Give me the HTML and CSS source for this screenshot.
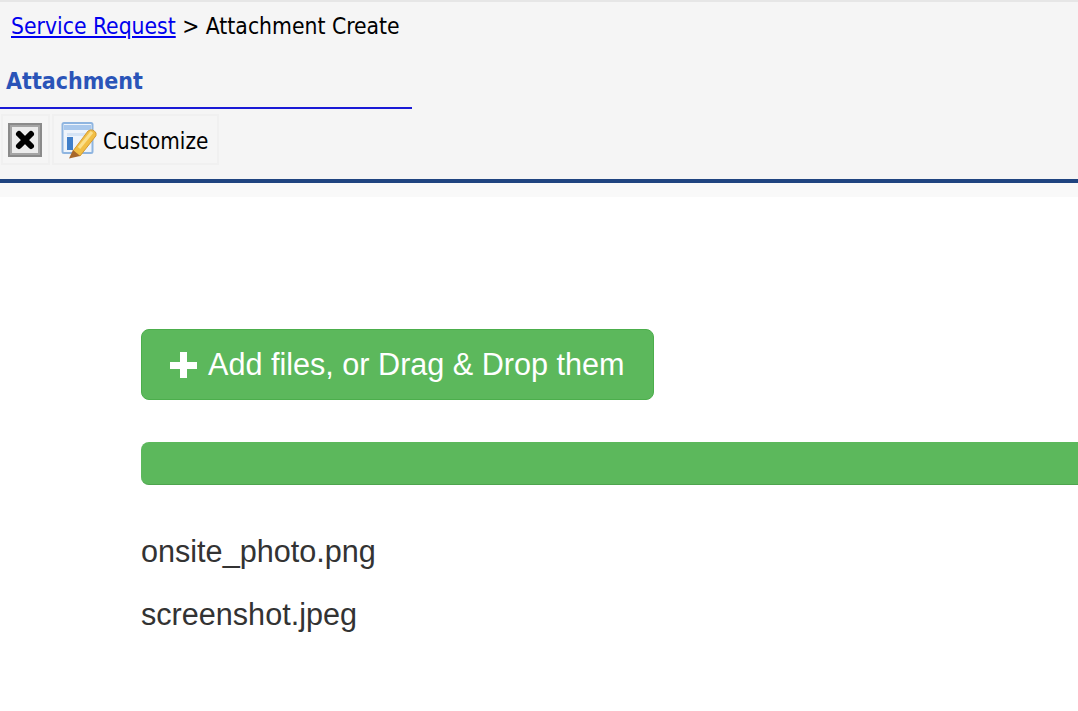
FILE: index.html
```html
<!DOCTYPE html>
<html lang="en">
<head>
<meta charset="utf-8">
<title>Attachment Create</title>
<link rel="stylesheet" href="styles.css">
</head>
<body>
<header class="header">
  <div class="crumbs"><a href="#">Service Request</a> &gt; Attachment Create</div>
  <div class="tab">Attachment</div>
  <div class="toolbar">
    <button class="tool tool-close" type="button" aria-label="Close">
      <svg width="36" height="36" viewBox="0 0 36 36">
        <rect x="1" y="1" width="34" height="34" fill="#8a8a8a"/>
        <rect x="3" y="3" width="30" height="30" fill="#a5a5a5"/>
        <rect x="5" y="5" width="26" height="26" fill="#ececec"/>
        <path d="M12 12 L24 24 M24 12 L12 24" stroke="#000" stroke-width="6" stroke-linecap="round"/>
      </svg>
    </button>
    <button class="tool tool-custom" type="button">
      <svg width="36" height="38" viewBox="0 0 36 38">
        <rect x="1.5" y="2" width="30" height="30" rx="1.5" fill="#eef4fb" stroke="#8fb5e0" stroke-width="2"/>
        <rect x="3" y="4" width="27" height="5" fill="#a9c8ec"/>
        <rect x="6" y="12" width="22" height="3" fill="#d5e4f5"/>
        <rect x="6" y="16" width="6" height="13" fill="#3f7fc9"/>
        <path d="M12 30 L27 10 Q32 7 35 12 Q35.500 15 34 16 L19 35 Z" fill="#f2bf45" stroke="#d59a30" stroke-width="1"/>
        <path d="M18 27 L31 11" stroke="#fbe08c" stroke-width="3"/>
        <path d="M8 37.500 L12 29 L19 35 Z" fill="#a8672a"/>
      </svg>
      <span class="tool-label">Customize</span>
    </button>
  </div>
</header>
<div class="strip"></div>
<main class="content">
  <button class="add" type="button">
    <svg class="plus" width="30" height="28" viewBox="0 0 30 28"><path d="M11 1h7v10h10v7H18v9h-7v-9H1v-7h10z" fill="#fff"/></svg>
    <span>Add files, or Drag &amp; Drop them</span>
  </button>
  <div class="bar"></div>
  <p class="file">onsite_photo.png</p>
  <p class="file">screenshot.jpeg</p>
</main>
</body>
</html>
```
FILE: styles.css
```css
* { box-sizing: border-box; }
html, body { margin: 0; padding: 0; height: 100%; background: #fff; overflow: hidden; }
body { font-family: "DejaVu Sans Condensed", "DejaVu Sans", sans-serif; font-stretch: condensed; }
.header {
  height: 183px;
  background: #f5f5f5;
  border-top: 2px solid #e6e6e6;
  border-bottom: 4px solid #1f4480;
  display: flex;
  flex-direction: column;
}
.crumbs { padding: 10px 0 0 11px; font-size: 22.7px; line-height: 28px; color: #000; height: 50px; }
.crumbs a { color: #0000ee; }
.tab {
  width: 412px;
  height: 57px;
  padding: 15px 0 0 6px;
  font-size: 23px;
  line-height: 28px;
  font-weight: bold;
  color: #2a54b8;
  border-bottom: 2px solid #1a1ad6;
}
.toolbar { display: flex; gap: 2px; padding: 5px 0 0 1px; }
.tool {
  height: 51px;
  margin: 0;
  padding: 0;
  border: 2px solid #f0f0f0;
  background: #f5f5f5;
  display: flex;
  align-items: center;
  font: inherit;
  color: #000;
}
.tool-close { width: 49px; padding-left: 4px; }
.tool-custom { width: 167px; padding-left: 7px; gap: 6px; font-size: 22.3px; font-stretch: condensed; }
.tool-label { padding-top: 2px; }
.strip { height: 14px; background: #f9f9f9; }
.content { padding: 132px 0 0 141px; font-family: "Liberation Sans", Arial, sans-serif; }
.add {
  width: 513px;
  height: 71px;
  margin: 0;
  padding: 0 0 0 27px;
  display: flex;
  align-items: center;
  gap: 9px;
  background: #5cb85c;
  border: 1px solid #4cae4c;
  border-radius: 8px;
  color: #fff;
  font: 30.6px "Liberation Sans", Arial, sans-serif;
}
.plus { flex: none; }
.bar {
  margin-top: 42px;
  height: 43px;
  background: #5cb85c;
  border-bottom: 1px solid #4ea44e;
  border-radius: 8px 0 0 8px;
}
.file { margin: 49px 0 0; font-size: 30.6px; line-height: 34px; color: #333; }
.file + .file { margin-top: 29px; }
```
